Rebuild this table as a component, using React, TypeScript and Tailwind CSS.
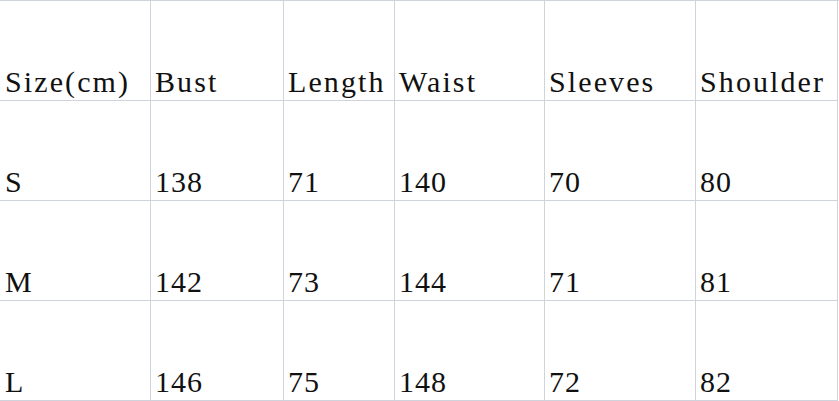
import React from "react";

const rows = [
  ["Size(cm)", "Bust", "Length", "Waist", "Sleeves", "Shoulder"],
  ["S", "138", "71", "140", "70", "80"],
  ["M", "142", "73", "144", "71", "81"],
  ["L", "146", "75", "148", "72", "82"],
];

function App() {
  return (
    <div className="w-[839px] h-[401px] bg-white overflow-hidden">
      <div className="grid grid-cols-[151px_133px_111px_150px_151px_142px] border-t border-[#cfd3dc] text-[#111] text-[30px] leading-none font-['Liberation_Serif',serif]">
        {rows.map((row, i) =>
          row.map((cell, j) => (
            <div
              key={i + "-" + j}
              className={
                "h-[100px] flex items-end pb-[3px] border-b border-r border-[#cfd3dc] whitespace-nowrap " +
                (j === 0 ? "pl-[5px] " : "pl-[4px] ") +
                (i === 0 ? "tracking-[2.1px]" : "tracking-[1px]")
              }
            >
              {cell}
            </div>
          ))
        )}
      </div>
    </div>
  );
}

export default App;
